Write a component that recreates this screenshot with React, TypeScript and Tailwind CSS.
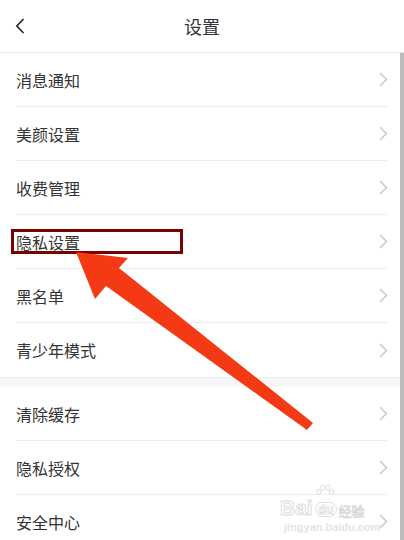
import React from "react";

const groupA = ["消息通知", "美颜设置", "收费管理", "隐私设置", "黑名单", "青少年模式"];
const groupB = ["清除缓存", "隐私授权", "安全中心"];

const font = { fontFamily: '"Noto Sans CJK SC", "Noto Sans", sans-serif' };
const latin = { fontFamily: '"Liberation Sans", Arial, sans-serif' };

function Chevron() {
  return (
    <svg width="9" height="15" viewBox="0 0 9 15" className="shrink-0">
      <path d="M1.5 1.5 L7.5 7.5 L1.5 13.5" fill="none" stroke="#c2c2c2" strokeWidth="1.3" strokeLinecap="round" strokeLinejoin="round" />
    </svg>
  );
}

function Row({ label, last, marked }: { label: string; last?: boolean; marked?: boolean }) {
  return (
    <div className="h-[54px] pl-4 pr-3">
      <div className={`h-full flex items-center justify-between ${last ? "" : "border-b border-[#eeeeee]"}`}>
        <span className="relative text-[16px] text-[#333333] leading-none">
          {marked && <span className="absolute left-[-5px] top-[-5px] w-[172px] h-[25px] border-[3px] border-[#7b0000]" />}
          {label}
        </span>
        <Chevron />
      </div>
    </div>
  );
}

export default function App() {
  return (
    <div className="relative w-[404px] h-[540px] overflow-hidden bg-white" style={font}>
      {/* Header */}
      <div className="h-[53px] border-b border-[#e6e6e6] flex items-center relative">
        <svg width="10" height="16" viewBox="0 0 10 16" className="ml-[15px]">
          <path d="M8.5 1 L1.8 8 L8.5 15" fill="none" stroke="#222222" strokeWidth="1.6" strokeLinejoin="miter" />
        </svg>
        <span className="absolute left-0 right-0 text-center text-[18px] text-[#333333] pointer-events-none">设置</span>
      </div>

      <div className="flex">
        <div className="flex-1">
          {groupA.map((t, i) => (
            <Row key={t} label={t} last={i === groupA.length - 1} marked={t === "隐私设置"} />
          ))}
          <div className="h-[10px] bg-[#f7f7f7] border-t border-[#eeeeee]" />
          {groupB.map((t) => (
            <Row key={t} label={t} />
          ))}
        </div>
        <div className="w-[4px] bg-[#bcbcbc]" />
      </div>

      {/* Watermark */}
      <div className="absolute left-[280px] top-[484px] w-[110px] pointer-events-none select-none">
        <svg className="absolute left-[36px] top-[0px]" width="18" height="14" viewBox="0 0 18 14">
          <g fill="none" stroke="#dedede" strokeWidth="1">
            <ellipse cx="3" cy="8" rx="2.2" ry="2.6" />
            <ellipse cx="7" cy="3.5" rx="2.2" ry="2.8" />
            <ellipse cx="12" cy="3.5" rx="2.2" ry="2.8" />
            <ellipse cx="15.5" cy="8" rx="2.2" ry="2.6" />
          </g>
        </svg>
        <div className="flex items-end gap-[2px] leading-none pt-[13px]">
          <span className="text-[21px] font-bold text-white" style={{ ...latin, WebkitTextStroke: "1px #dcdcdc" }}>Bai</span>
          <span className="text-[13px] font-bold text-white rounded-full border border-[#dedede] px-[2px] mb-[1px]" style={{ ...latin, WebkitTextStroke: "0.8px #dcdcdc" }}>
            du
          </span>
          <span className="text-[13px] text-white mb-[1px]" style={{ WebkitTextStroke: "0.8px #d8d8d8" }}>经验</span>
        </div>
        <div className="text-[11px] font-bold text-[#e4e4e4] mt-[4px] ml-[4px] leading-none" style={latin}>
          jingyan.baidu.com
        </div>
      </div>

      {/* Arrow */}
      <svg className="absolute inset-0 pointer-events-none" width="404" height="540" viewBox="0 0 404 540">
        <polygon points="76,252 128,258 119,268 313,423 307,430 106,286 95,299" fill="#f33a15" />
      </svg>
    </div>
  );
}
